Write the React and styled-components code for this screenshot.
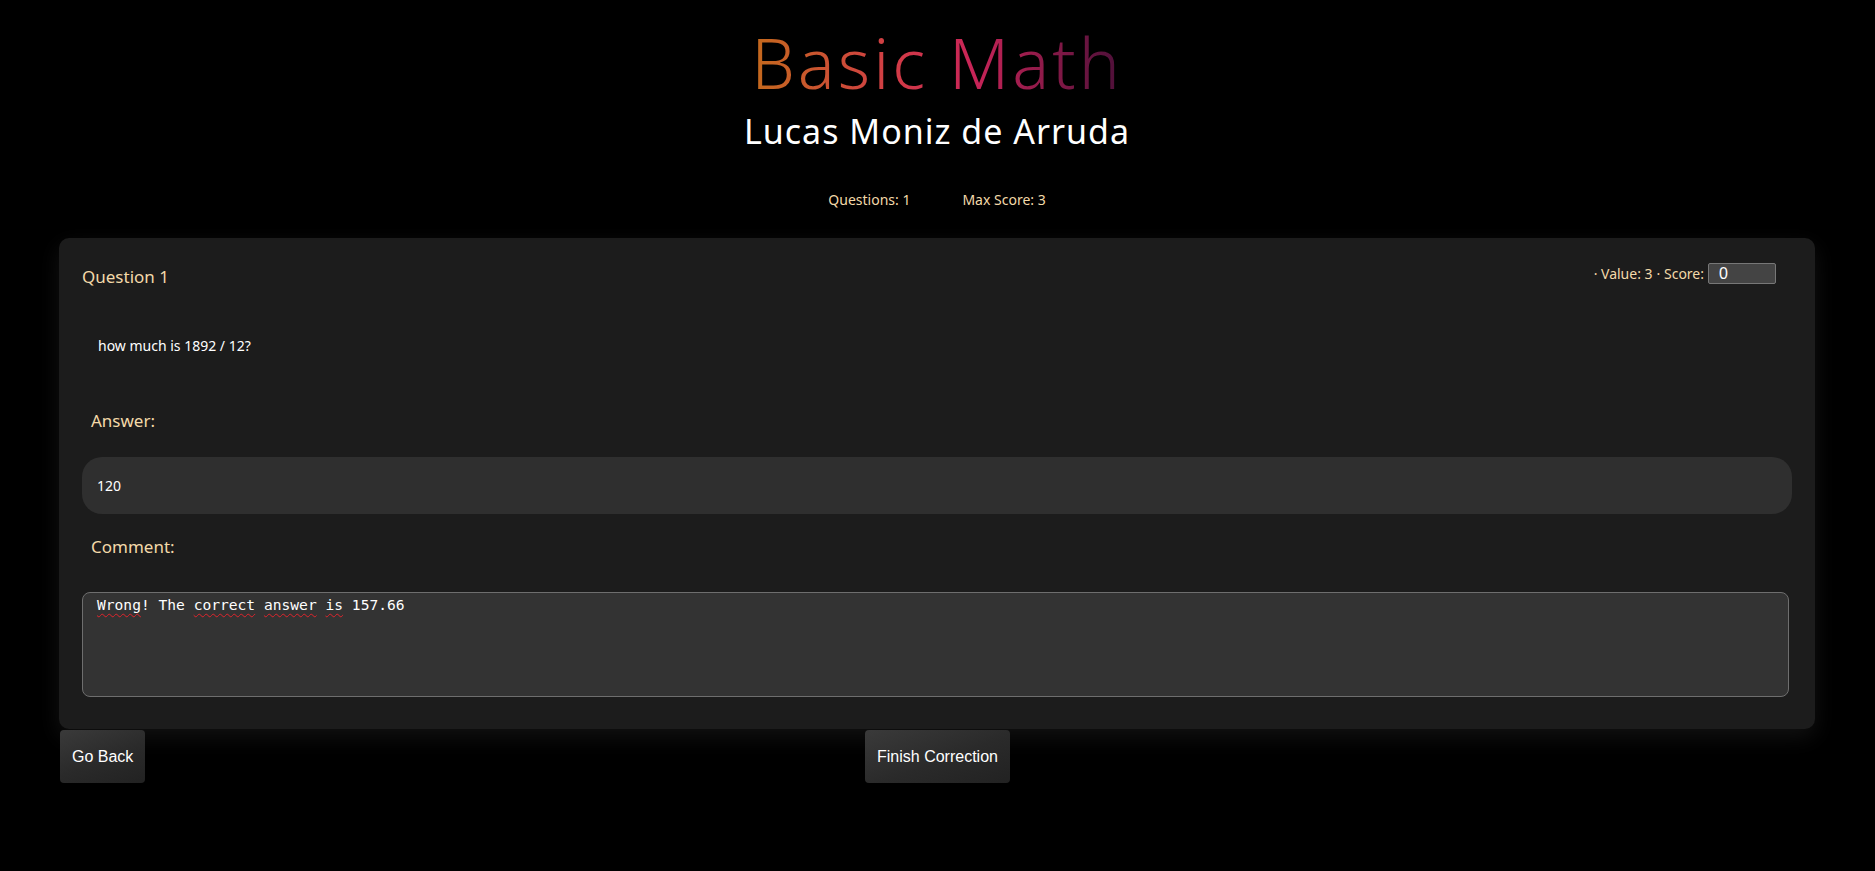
import React from "react";
import styled, { createGlobalStyle } from "styled-components";

const GlobalStyle = createGlobalStyle`
  body {
    margin: 0;
    background: #000;
    font-family: "Noto Sans", "Open Sans", sans-serif;
  }
`;

const Page = styled.main`
  padding: 22px 60px 40px 59px;
`;

const Header = styled.header`
  text-align: center;
`;

const Title = styled.h1`
  margin: 0;
  display: inline-block;
  font-size: 69px;
  line-height: 80px;
  font-weight: 300;
  letter-spacing: 3px;
  background: linear-gradient(90deg, #c46a1c 0%, #d23a48 40%, #c82458 60%, #4a0f38 100%);
  -webkit-background-clip: text;
  background-clip: text;
  -webkit-text-fill-color: transparent;
`;

const Subtitle = styled.h2`
  margin: 9px 0 0;
  font-size: 34px;
  line-height: 40px;
  font-weight: 400;
  letter-spacing: 1px;
  color: #fff;
`;

const Stats = styled.div`
  display: flex;
  justify-content: center;
  gap: 52px;
  margin-top: 39px;
  font-size: 14px;
  line-height: 20px;
  color: #f3d9a9;
`;

const Card = styled.section`
  margin-top: 28px;
  background: #1c1c1c;
  border-radius: 10px;
  padding: 25px 23px 32px;
  box-shadow: 0 8px 22px rgba(40, 40, 40, 0.45);
`;

const CardHead = styled.div`
  display: flex;
  justify-content: space-between;
  align-items: flex-start;
`;

const QuestionLabel = styled.h3`
  margin: 2px 0 0;
  font-size: 17px;
  line-height: 24px;
  font-weight: 400;
  color: #f3d9a9;
`;

const ScoreBox = styled.div`
  display: flex;
  align-items: center;
  gap: 4px;
  margin-right: 16px;
  font-size: 14px;
  color: #f3d9a9;
`;

const ScoreInput = styled.input`
  box-sizing: border-box;
  width: 68px;
  height: 21px;
  padding: 0 10px;
  background: #444;
  border: 1px solid #777;
  border-radius: 2px;
  color: #fff;
  font-family: "Liberation Sans", Arial, sans-serif;
  font-size: 16px;
`;

const QuestionText = styled.p`
  margin: 47px 0 0 16px;
  font-size: 14px;
  line-height: 20px;
  color: #fff;
`;

const FieldLabel = styled.h4`
  margin: ${(p) => p.$top}px 0 0 9px;
  font-size: 17px;
  line-height: 22px;
  font-weight: 400;
  color: #f3d9a9;
`;

const AnswerBox = styled.div`
  margin-top: 25px;
  height: 57px;
  display: flex;
  align-items: center;
  padding: 0 15px;
  background: #2f2f2f;
  border-radius: 20px;
  font-size: 14px;
  color: #fff;
`;

const CommentBox = styled.div`
  margin: 34px 3px 0 0;
  height: 105px;
  box-sizing: border-box;
  padding: 3px 14px;
  background: #333;
  border: 1px solid #6e6e6e;
  border-radius: 8px;
  font-family: "DejaVu Sans Mono", "Liberation Mono", monospace;
  font-size: 14.6px;
  color: #fff;
  white-space: pre;
`;

const Misspelled = styled.span`
  text-decoration: underline wavy #e0242c;
  text-decoration-thickness: 1px;
  text-underline-offset: 3px;
`;

const Actions = styled.div`
  display: grid;
  grid-template-columns: 1fr auto 1fr;
  align-items: start;
  margin-top: 1px;
  margin-left: 1px;
`;

const Button = styled.button`
  grid-column: ${(p) => p.$col};
  justify-self: start;
  height: 53px;
  padding: 0 12px;
  border: none;
  border-radius: 4px;
  background: linear-gradient(160deg, #3a3a3a 0%, #2a2a2a 55%, #222 100%);
  color: #fff;
  font-family: "Liberation Sans", Arial, sans-serif;
  font-size: 16px;
  cursor: pointer;
`;

export default function App() {
  return (
    <>
      <GlobalStyle />
      <Page>
        <Header>
          <Title>Basic Math</Title>
          <Subtitle>Lucas Moniz de Arruda</Subtitle>
        </Header>
        <Stats>
          <span>Questions: 1</span>
          <span>Max Score: 3</span>
        </Stats>
        <Card>
          <CardHead>
            <QuestionLabel>Question 1</QuestionLabel>
            <ScoreBox>
              <span>· Value: 3</span>
              <span>· Score:</span>
              <ScoreInput defaultValue="0" />
            </ScoreBox>
          </CardHead>
          <QuestionText>how much is 1892 / 12?</QuestionText>
          <FieldLabel $top={54}>Answer:</FieldLabel>
          <AnswerBox>120</AnswerBox>
          <FieldLabel $top={22}>Comment:</FieldLabel>
          <CommentBox>
            <Misspelled>Wrong</Misspelled>! The <Misspelled>correct</Misspelled>{" "}
            <Misspelled>answer</Misspelled> <Misspelled>is</Misspelled> 157.66
          </CommentBox>
        </Card>
        <Actions>
          <Button $col={1}>Go Back</Button>
          <Button $col={2}>Finish Correction</Button>
        </Actions>
      </Page>
    </>
  );
}
